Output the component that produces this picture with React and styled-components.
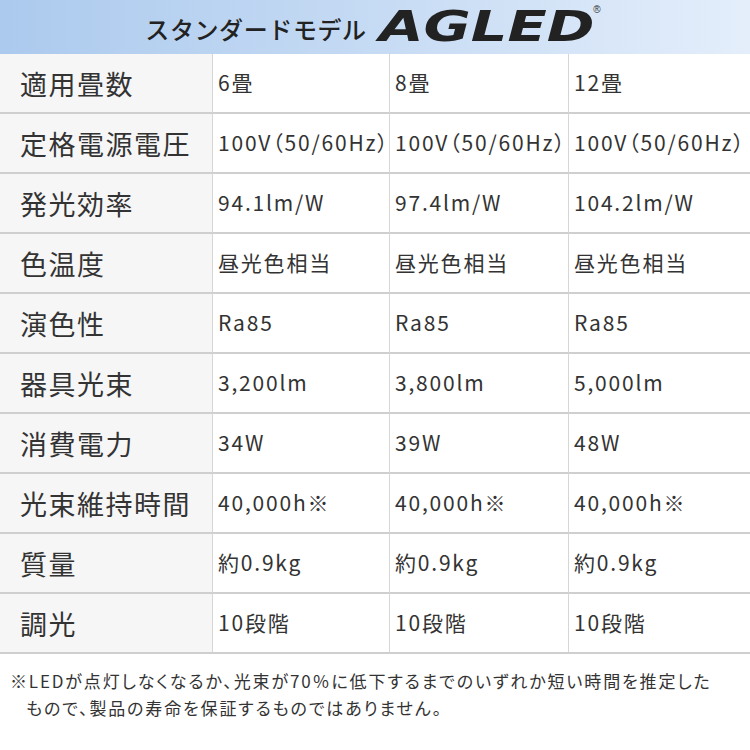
import React from 'react';
import styled, { createGlobalStyle } from 'styled-components';

const GlobalStyle = createGlobalStyle`
  html, body {
    margin: 0;
    padding: 0;
    background: #fff;
  }
  body {
    font-family: "Noto Sans CJK JP", "Noto Sans", sans-serif;
    color: #333;
  }
`;

const Page = styled.div`
  width: 750px;
  height: 750px;
  overflow: hidden;
  background: #fff;
`;

const Header = styled.div`
  height: 54px;
  display: flex;
  align-items: center;
  justify-content: center;
  gap: 12px;
  padding-right: 4px;
  background: linear-gradient(90deg, #accaee 0%, #c3d9f3 45%, #e4eefb 100%);
`;

const HeaderTitle = styled.span`
  font-size: 24px;
  font-weight: 500;
  color: #222;
  letter-spacing: 0.6px;
  margin-top: 2px;
`;

const Logo = styled.span`
  position: relative;
  display: inline-block;
  width: 222px;
  height: 40px;
`;

const LogoText = styled.span`
  display: inline-block;
  font-family: "DejaVu Sans", "Liberation Sans", sans-serif;
  font-weight: 700;
  font-style: italic;
  font-size: 42px;
  line-height: 40px;
  color: #222;
  transform: scaleX(1.37);
  transform-origin: left center;
`;

const Registered = styled.span`
  position: absolute;
  top: -3px;
  right: 0;
  font-size: 10px;
  font-family: "Liberation Sans", sans-serif;
  color: #333;
`;

const Table = styled.div`
  display: grid;
  grid-template-columns: 213px 177px 179px 1fr;
  border-bottom: 2px solid #cfcfcf;
`;

const LabelCell = styled.div`
  display: flex;
  align-items: center;
  padding-left: 20px;
  background: #f6f6f6;
  border-top: ${p => (p.$first ? 'none' : '2px solid #cfcfcf')};
  border-right: 1px solid #d6d6d6;
  font-size: 27px;
  letter-spacing: 1.5px;
  color: #333;
  box-sizing: border-box;
  height: ${p => (p.$first ? '58px' : '60px')};
`;

const ValueCell = styled.div`
  display: flex;
  align-items: center;
  padding-left: 5px;
  padding-bottom: 2px;
  border-top: ${p => (p.$first ? 'none' : '2px solid #cfcfcf')};
  border-right: ${p => (p.$last ? 'none' : '1px solid #d6d6d6')};
  font-size: 21px;
  letter-spacing: 1.8px;
  font-feature-settings: "palt";
  color: #333;
  white-space: nowrap;
  overflow: hidden;
  box-sizing: border-box;
  height: ${p => (p.$first ? '58px' : '60px')};
`;

const Note = styled.p`
  margin: 0;
  padding: 13px 0 0 10px;
  font-size: 17px;
  line-height: 27px;
  letter-spacing: 1.85px;
  font-feature-settings: "palt";
  white-space: nowrap;
  color: #333;
`;

const NoteIndent = styled.span`
  display: inline-block;
  width: 16px;
`;

const rows = [
  ['適用畳数', '6畳', '8畳', '12畳'],
  ['定格電源電圧', '100V（50/60Hz）', '100V（50/60Hz）', '100V（50/60Hz）'],
  ['発光効率', '94.1lm/W', '97.4lm/W', '104.2lm/W'],
  ['色温度', '昼光色相当', '昼光色相当', '昼光色相当'],
  ['演色性', 'Ra85', 'Ra85', 'Ra85'],
  ['器具光束', '3,200lm', '3,800lm', '5,000lm'],
  ['消費電力', '34W', '39W', '48W'],
  ['光束維持時間', '40,000h※', '40,000h※', '40,000h※'],
  ['質量', '約0.9kg', '約0.9kg', '約0.9kg'],
  ['調光', '10段階', '10段階', '10段階'],
];

const App = () => (
  <Page>
    <GlobalStyle />
    <Header>
      <HeaderTitle>スタンダードモデル</HeaderTitle>
      <Logo>
        <LogoText>AGLED</LogoText>
        <Registered>®</Registered>
      </Logo>
    </Header>
    <Table>
      {rows.map((row, i) => (
        <React.Fragment key={row[0]}>
          <LabelCell $first={i === 0}>{row[0]}</LabelCell>
          {row.slice(1).map((v, j) => (
            <ValueCell key={j} $first={i === 0} $last={j === 2}>
              {v}
            </ValueCell>
          ))}
        </React.Fragment>
      ))}
    </Table>
    <Note>
      ※LEDが点灯しなくなるか、光束が70％に低下するまでのいずれか短い時間を推定した
      <br />
      <NoteIndent />もので、製品の寿命を保証するものではありません。
    </Note>
  </Page>
);

export default App;
